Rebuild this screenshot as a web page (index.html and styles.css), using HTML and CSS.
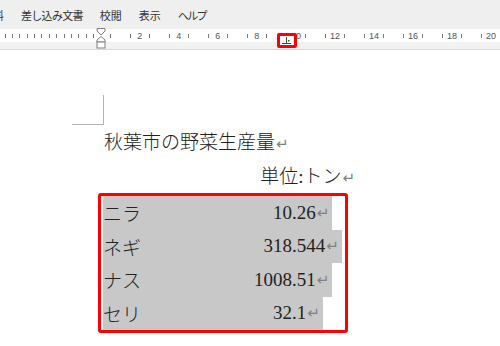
FILE: index.html
```html
<!DOCTYPE html>
<html lang="ja">
<head>
    <meta charset="UTF-8">
    <meta name="viewport" content="width=device-width, initial-scale=1.0">
    <title>秋葉市の野菜生産量</title>
    <link rel="stylesheet" href="styles.css">
</head>
<body>
    <div class="menubar">
        <span class="menu-item cut">料</span>
        <span class="menu-item tight">差し込み文書</span>
        <span class="menu-item">校閲</span>
        <span class="menu-item">表示</span>
        <span class="menu-item narrow">ヘルプ</span>
    </div>

    <div class="ruler">
        <div class="ruler-band">
            <div class="ticks-left">
                <i></i><i></i><i></i><i></i><i></i><i></i><i></i><i></i><i></i><i></i><i></i><i></i><i></i>
            </div>
            <div class="ticks-right">
                <span></span>
                <span><i></i></span><span></span><span><i></i></span><span><b>2</b></span>
                <span><i></i></span><span></span><span><i></i></span><span><b>4</b></span>
                <span><i></i></span><span></span><span><i></i></span><span><b>6</b></span>
                <span><i></i></span><span></span><span><i></i></span><span><b>8</b></span>
                <span><i></i></span><span></span><span><i></i></span><span><b>10</b></span>
                <span><i></i></span><span></span><span><i></i></span><span><b>12</b></span>
                <span><i></i></span><span></span><span><i></i></span><span><b>14</b></span>
                <span><i></i></span><span></span><span><i></i></span><span><b>16</b></span>
                <span><i></i></span><span></span><span><i></i></span><span><b>18</b></span>
                <span><i></i></span><span></span><span><i></i></span><span><b>20</b></span>
            </div>
        </div>
        <!-- インデントマーカー -->
        <svg class="indent-marker" width="11" height="21" viewBox="0 0 11 21">
            <polygon points="1,0.5 9,0.5 9,3 5,7 1,3" fill="#fff" stroke="#808080" stroke-width="1"/>
            <polygon points="5,8.5 9,12 9,14 1,14 1,12" fill="#fff" stroke="#808080" stroke-width="1"/>
            <rect x="1" y="14" width="8" height="6" fill="#fff" stroke="#808080" stroke-width="1"/>
        </svg>
        <!-- 小数点揃えタブ -->
        <div class="tab-box">
            <svg width="14" height="9" viewBox="0 0 14 9">
                <line x1="6.5" y1="1" x2="6.5" y2="7" stroke="#444" stroke-width="1"/>
                <line x1="2" y1="7.5" x2="11" y2="7.5" stroke="#444" stroke-width="1"/>
                <rect x="8" y="4" width="1.5" height="1.5" fill="#444"/>
            </svg>
        </div>
    </div>

    <div class="page">
        <div class="corner"></div>
        <p class="doc-title">秋葉市の野菜生産量<span class="ret">↵</span></p>
        <p class="unit">単位:トン<span class="ret">↵</span></p>

        <div class="table-box">
            <div class="row">
                <span class="label">ニラ</span><span class="int">10</span><span class="frac">.26</span><span class="ret">↵</span>
            </div>
            <div class="row">
                <span class="label">ネギ</span><span class="int">318</span><span class="frac">.544</span><span class="ret">↵</span>
            </div>
            <div class="row">
                <span class="label">ナス</span><span class="int">1008</span><span class="frac">.51</span><span class="ret">↵</span>
            </div>
            <div class="row">
                <span class="label">セリ</span><span class="int">32</span><span class="frac">.1</span><span class="ret">↵</span>
            </div>
        </div>
    </div>
</body>
</html>
```

FILE: styles.css
```css
body {
    margin: 0;
    width: 500px;
    height: 346px;
    overflow: hidden;
    background: #fff;
    font-family: "Liberation Serif", "Noto Sans CJK JP", serif;
    font-weight: 300;
    color: #222;
}
.menubar {
    height: 29px;
    background: #efefef;
    display: flex;
    align-items: center;
    overflow: hidden;
    white-space: nowrap;
    font-family: "Noto Sans CJK JP", sans-serif;
    font-weight: 400;
    font-size: 11px;
    color: #333;
}
.menu-item {
    margin-right: 17px;
}
.menu-item.cut {
    margin-left: -7px;
}
.menu-item.tight {
    letter-spacing: -0.7px;
}
.menu-item.narrow {
    letter-spacing: -1.6px;
}
.ruler {
    position: relative;
    height: 20px;
    background: #f2f2f2;
    border-bottom: 1px solid #d9d9d9;
}
.ruler-band {
    height: 13px;
    background: #fff;
    display: flex;
    align-items: center;
}
.ticks-left {
    width: 96px;
    box-sizing: border-box;
    padding: 0 2px 0 4.5px;
    display: flex;
    justify-content: space-between;
    align-items: center;
}
.ticks-left i,
.ticks-right i {
    display: block;
    width: 1px;
    height: 4px;
    background: #7a7a7a;
}
.ticks-right {
    display: flex;
    align-items: center;
}
.ticks-right span {
    width: 9.75px;
    flex-shrink: 0;
    display: flex;
    justify-content: center;
    align-items: center;
}
.ticks-right b {
    font-weight: normal;
    font-family: "Liberation Sans", sans-serif;
    font-size: 9px;
    line-height: 10px;
    color: #555;
}
.indent-marker {
    position: absolute;
    left: 96px;
    top: -1px;
}
.tab-box {
    position: absolute;
    left: 277px;
    top: 4px;
    width: 20px;
    height: 15px;
    box-sizing: border-box;
    border: 3px solid #ff0000;
    border-radius: 2px;
    background: #fff;
    display: flex;
    align-items: center;
    justify-content: center;
}
.page {
    padding-top: 45px;
}
.corner {
    margin-left: 72px;
    width: 32px;
    height: 30px;
    box-sizing: border-box;
    border-right: 1px solid #b3b3b3;
    border-bottom: 1px solid #b3b3b3;
}
.doc-title {
    margin: 3px 0 0 104px;
    font-size: 19px;
    line-height: 30px;
}
.unit {
    margin: 3px 0 0 104px;
    width: 251px;
    text-align: right;
    font-size: 19px;
    line-height: 29px;
}
.ret {
    font-family: "DejaVu Sans", sans-serif;
    font-weight: 400;
    font-size: 15px;
    color: #808080;
    margin-left: 1px;
}
.table-box {
    margin-left: 98px;
    width: 250px;
    height: 140px;
    box-sizing: border-box;
    border: 3px solid #ff0000;
    border-radius: 3px;
    padding-left: 2px;
    display: flex;
    flex-direction: column;
    align-items: flex-start;
}
.row {
    display: flex;
    align-items: center;
    height: 33.5px;
    padding-right: 3px;
    background: #c8c8c8;
    font-size: 19px;
}
.label {
    width: 60px;
}
.int {
    width: 129px;
    text-align: right;
}
```
